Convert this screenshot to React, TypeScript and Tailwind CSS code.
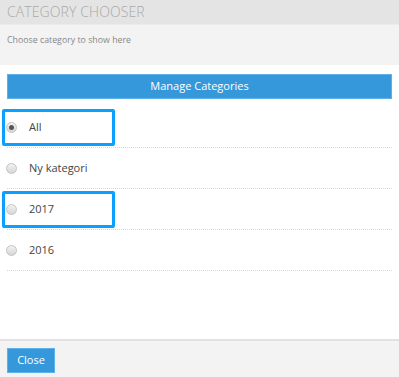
const rows = [
  { label: "All", checked: true, marked: true },
  { label: "Ny kategori", checked: false, marked: false },
  { label: "2017", checked: false, marked: true },
  { label: "2016", checked: false, marked: false },
];

function Radio({ checked }: { checked: boolean }) {
  return (
    <span className="flex h-[11px] w-[11px] items-center justify-center rounded-full border border-[#c4c4c4] bg-gradient-to-b from-[#f2f2f2] to-[#d6d6d6]">
      {checked && <span className="h-[5px] w-[5px] rounded-full bg-[#555]" />}
    </span>
  );
}

export default function App() {
  return (
    <div className="flex h-[377px] w-[399px] flex-col bg-white font-['Open_Sans',sans-serif]">
      {/* Header */}
      <div className="flex h-[24px] items-center bg-[#e4e4e4] px-[7px]">
        <h1 className="text-[14px] leading-none font-light tracking-[0.1px] text-[#a9a9a9]">CATEGORY CHOOSER</h1>
      </div>
      <div className="h-[41px] border-t border-[#ececec] bg-[#f3f3f3] px-[7px] pt-[9px]">
        <p className="text-[8.8px] text-[#888]">Choose category to show here</p>
      </div>

      {/* Body */}
      <div className="flex-1 px-[7px] pt-[9px]">
        <button className="flex h-[25px] w-full items-center justify-center border border-[#5eb0e8] bg-[#3498db] text-[11px] text-white">
          Manage Categories
        </button>
        <ul className="mt-[8px]">
          {rows.map((r) => (
            <li
              key={r.label}
              className="relative flex h-[41px] items-center gap-[12px] border-b border-dotted border-[#d8d8d8]"
            >
              <span className="-ml-[1px]">
                <Radio checked={r.checked} />
              </span>
              <span className="text-[11px] text-[#444]">{r.label}</span>
              {r.marked && (
                <span className="pointer-events-none absolute top-[2px] left-[-5px] h-[37px] w-[113px] rounded-[2px] border-[3px] border-[#0aa0ff]" />
              )}
            </li>
          ))}
        </ul>
      </div>

      {/* Footer */}
      <div className="h-[38px] border-t-2 border-[#e2e2e2] bg-[#f3f3f3] px-[7px] pt-[7px]">
        <button className="flex h-[25px] w-[48px] items-center justify-center border border-[#5eb0e8] bg-[#3498db] text-[11px] text-white">
          Close
        </button>
      </div>
    </div>
  );
}
